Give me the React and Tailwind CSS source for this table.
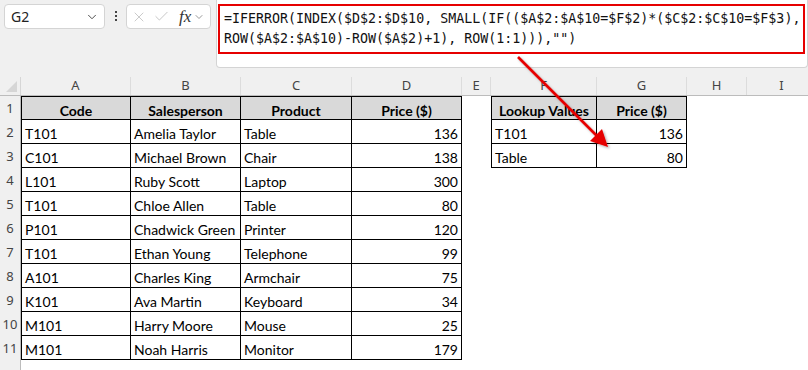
import { ChevronDown, X, Check } from 'lucide-react';

const COLS = [
  { key: 'A', w: 110 },
  { key: 'B', w: 110 },
  { key: 'C', w: 111 },
  { key: 'D', w: 110 },
  { key: 'E', w: 29 },
  { key: 'F', w: 106 },
  { key: 'G', w: 90 },
  { key: 'H', w: 60 },
  { key: 'I', w: 70 },
];

const sales = [
  ['T101', 'Amelia Taylor', 'Table', 136],
  ['C101', 'Michael Brown', 'Chair', 138],
  ['L101', 'Ruby Scott', 'Laptop', 300],
  ['T101', 'Chloe Allen', 'Table', 80],
  ['P101', 'Chadwick Green', 'Printer', 120],
  ['T101', 'Ethan Young', 'Telephone', 99],
  ['A101', 'Charles King', 'Armchair', 75],
  ['K101', 'Ava Martin', 'Keyboard', 34],
  ['M101', 'Harry Moore', 'Mouse', 25],
  ['M101', 'Noah Harris', 'Monitor', 179],
];

const lookup = [
  ['T101', 136],
  ['Table', 80],
];

// builds the 11 visible rows as { colKey: value }
function buildRows() {
  const rows = [];
  rows.push({ A: 'Code', B: 'Salesperson', C: 'Product', D: 'Price ($)', F: 'Lookup Values', G: 'Price ($)' });
  sales.forEach((s, i) => {
    const row = { A: s[0], B: s[1], C: s[2], D: s[3] };
    if (lookup[i]) {
      row.F = lookup[i][0];
      row.G = lookup[i][1];
    }
    rows.push(row);
  });
  return rows;
}

function inMainTable(col) {
  return ['A', 'B', 'C', 'D'].includes(col);
}

function inLookup(col, r) {
  return (col === 'F' || col === 'G') && r <= 3;
}

function Cell({ col, r, value, w }) {
  const bordered = inMainTable(col) || inLookup(col, r);
  const header = r === 1 && bordered;
  const numeric = typeof value === 'number';
  const left = bordered && (col === 'A' || col === 'F');

  return (
    <div
      style={{ width: w }}
      className={`h-[24px] shrink-0 overflow-hidden whitespace-nowrap px-[3px] pt-[3px] text-[14px] leading-[21px] text-black ${
        bordered ? 'border-r border-b border-black' : ''
      } ${left ? 'border-l' : ''} ${header ? 'border-t bg-[#d9d9d9] text-center font-bold' : ''} ${
        numeric ? 'text-right' : ''
      }`}
    >
      {value}
    </div>
  );
}

function FormulaBar() {
  return (
    <div className="flex h-[77px] items-start bg-[#f0f0f0]">
      <div className="ml-[4px] mt-[4px] flex h-[25px] w-[101px] items-center justify-between rounded-[4px] border border-[#d4d4d4] bg-white pl-[6px] pr-[5px]">
        <span className="font-['Noto_Sans',sans-serif] text-[14px] text-[#222]">G2</span>
        <ChevronDown className="h-[14px] w-[14px] text-[#444]" strokeWidth={1.6} />
      </div>
      <div className="mt-[11px] flex w-[21px] flex-col items-center gap-[2px]">
        <span className="h-[2px] w-[2px] bg-[#444]" />
        <span className="h-[2px] w-[2px] bg-[#444]" />
        <span className="h-[2px] w-[2px] bg-[#444]" />
      </div>
      <div className="mt-[4px] flex h-[25px] w-[85px] items-center rounded-[4px] border border-[#d4d4d4] bg-white pl-[4px]">
        <X className="h-[16px] w-[16px] text-[#bdbdbd]" strokeWidth={1.2} />
        <Check className="ml-[6px] h-[17px] w-[17px] text-[#bdbdbd]" strokeWidth={1.2} />
        <span className="ml-[9px] font-['Liberation_Serif',serif] text-[17px] italic leading-none text-[#333]">fx</span>
        <ChevronDown className="ml-[2px] h-[12px] w-[12px] text-[#777]" strokeWidth={1.5} />
      </div>
      <div className="ml-[5px] h-[68px] flex-1 rounded-b-[4px] border-x border-b border-[#d4d4d4] bg-white pl-[1px] pr-[2px] pt-[4px]">
        <div className="h-[50px] border-2 border-[#e60000] pl-[4px] pt-[3px] font-['DejaVu_Sans_Mono',monospace] text-[13.3px] leading-[20px] text-[#111]">
          <div className="whitespace-nowrap">=IFERROR(INDEX($D$2:$D$10, SMALL(IF(($A$2:$A$10=$F$2)*($C$2:$C$10=$F$3),</div>
          <div className="whitespace-nowrap">ROW($A$2:$A$10)-ROW($A$2)+1), ROW(1:1))),"")</div>
        </div>
      </div>
    </div>
  );
}

function ColumnHeaders() {
  return (
    <div className="flex h-[19px] border-b border-[#bcbcbc] bg-[#f0f0f0]">
      <div className="relative h-full w-[21px] shrink-0 border-r border-[#d6d6d6]">
        <div className="absolute bottom-[3px] right-[3px] h-0 w-0 border-b-[11px] border-l-[11px] border-b-[#d6d6d6] border-l-transparent" />
      </div>
      {COLS.map((c) => (
        <div
          key={c.key}
          style={{ width: c.w }}
          className="flex h-full shrink-0 items-center justify-center border-r border-[#dcdcdc] font-['Noto_Sans',sans-serif] text-[13px] text-[#444]"
        >
          {c.key}
        </div>
      ))}
    </div>
  );
}

function Sheet() {
  const rows = buildRows();
  return (
    <div className="bg-white font-['Lato',sans-serif]">
      {rows.map((row, i) => (
        <div key={i} className="flex">
          <div className="flex h-[24px] w-[21px] shrink-0 items-end justify-center border-r border-[#bcbcbc] bg-[#f0f0f0] pb-[2px] font-['Noto_Sans',sans-serif] text-[13px] text-[#444]">
            {i + 1}
          </div>
          {COLS.map((c) => (
            <Cell key={c.key} col={c.key} r={i + 1} value={row[c.key]} w={c.w} />
          ))}
        </div>
      ))}
      <div className="flex h-[20px]">
        <div className="w-[21px] border-r border-[#bcbcbc] bg-[#f0f0f0]" />
      </div>
    </div>
  );
}

export default function App() {
  return (
    <div className="relative h-[370px] w-[808px] overflow-hidden bg-[#f0f0f0]">
      <FormulaBar />
      <ColumnHeaders />
      <Sheet />
      {/* pointer from the formula down to the result cell */}
      <svg className="pointer-events-none absolute left-0 top-0" width="808" height="370">
        <defs>
          <filter id="arrowShadow" x="-20%" y="-20%" width="140%" height="140%">
            <feDropShadow dx="1.5" dy="1.5" stdDeviation="1.2" floodColor="#000" floodOpacity="0.3" />
          </filter>
        </defs>
        <g filter="url(#arrowShadow)">
          <line x1="518" y1="57" x2="598" y2="137" stroke="#e60000" strokeWidth="2.6" />
          <polygon points="608,147 590,141 602,129" fill="#e60000" />
        </g>
      </svg>
    </div>
  );
}
